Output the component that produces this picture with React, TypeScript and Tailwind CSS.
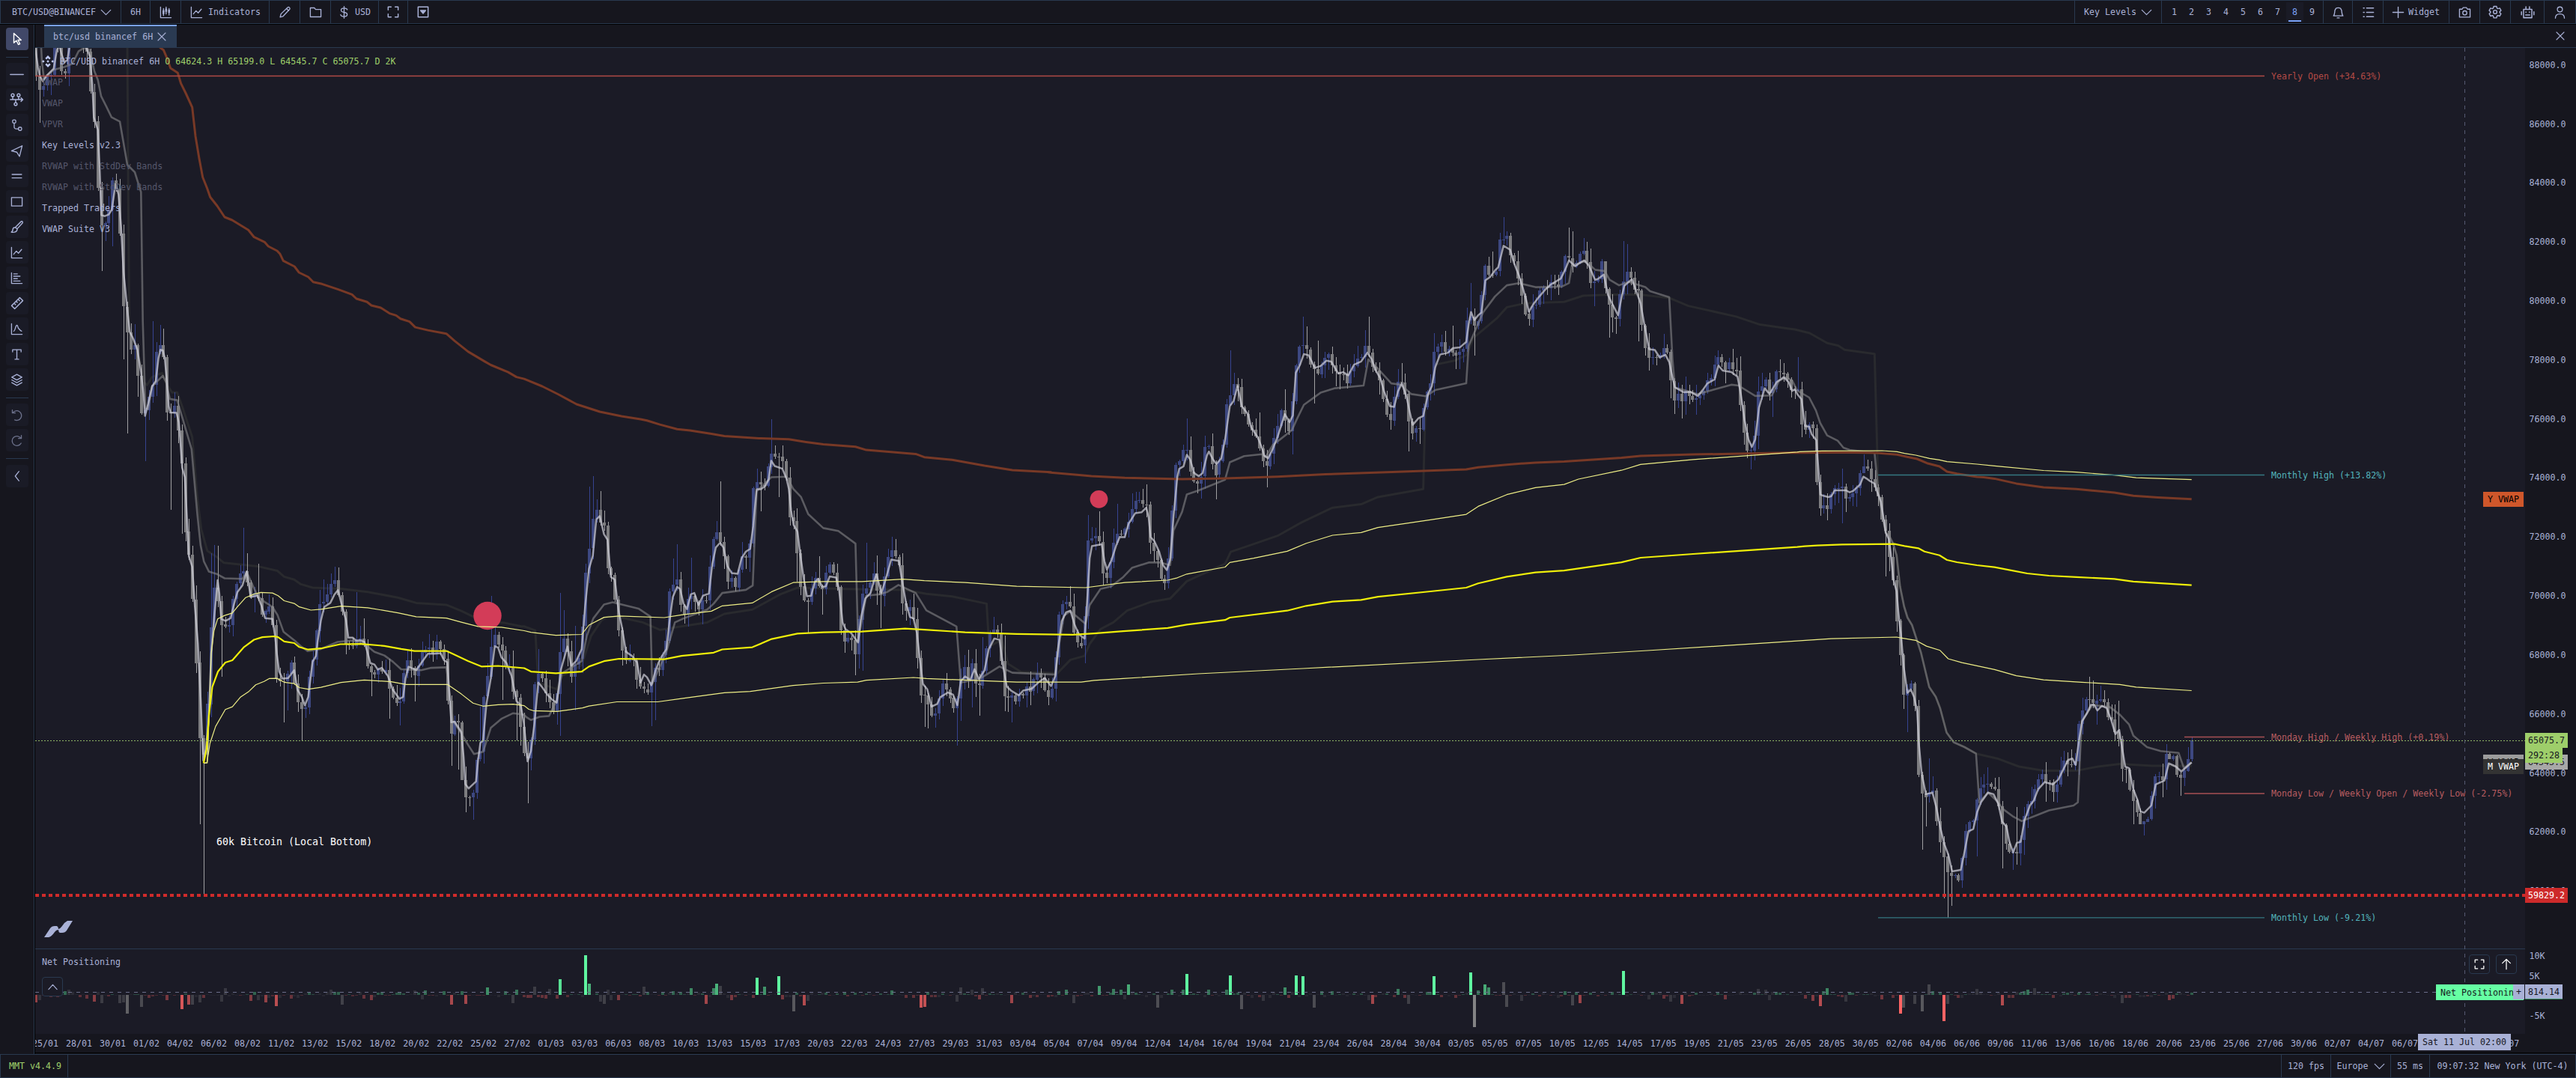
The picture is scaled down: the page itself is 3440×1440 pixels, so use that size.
import type { ReactNode } from 'react'

type Pt = [number, number]

// Each trace is stored in blocks: origin x/y, scale x/y, then a flat list of x,y pairs
interface Block {
  o: [number, number, number, number]
  d: number[]
}

const A: Block['o'] = [0, 30, 3, 3]
const C: Block['o'] = [0, 300, 2.24, 2.8]
const D: Block['o'] = [0, 850, 2.24, 2.6576]
const E: Block['o'] = [600, 560, 1.7422, 2.8]
const F: Block['o'] = [1400, 280, 1.568, 2.8]
const G: Block['o'] = [2260, 440, 3, 3]
const H: Block['o'] = [2300, 560, 1.3754, 2.306]
const P: Block['o'] = [0, 0, 1, 1]

function unpack(blocks: Block[]): Pt[] {
  const out: Pt[] = []
  for (const { o, d } of blocks) {
    for (let i = 0; i < d.length; i += 2) {
      out.push([o[0] + d[i] / o[2], o[1] + d[i + 1] / o[3]])
    }
  }
  return out
}

const toPoints = (pts: Pt[]) => pts.map(p => `${p[0].toFixed(1)},${p[1].toFixed(1)}`).join(' ')

// ---------- traces ----------

const DAILY: Block[] = [
  { o: A, d: [141,100,152,180,160,215,172,236,185,215,200,200,215,185,228,110,238,90,246,125,258,160,270,150,278,100,290,40,310,20,330,40,345,100,360,135,370,250,376,380,392,430,400,600,406,772,420,776,435,770,448,750,458,680,463,648,475,690,485,820,495,1000,510,1150,520,1240,535,1270,550,1310,565,1400,575,1490] },
  { o: C, d: [434,715,443,670,455,605,466,585,474,500,480,468,487,470,493,500,500,600,505,680,510,703,528,704,535,740,540,820,545,910,553,945,560,1120,565,1240,575,1280,583,1430,592,1567] },
  { o: D, d: [600,220,608,440,616,400,624,300,632,60] },
  { o: C, d: [640,1480,651,1330,656,1380,662,1475,675,1482,690,1472,700,1420,710,1375,725,1350,738,1297,750,1393,770,1387,782,1425,793,1472,815,1475,823,1540] },
  { o: D, d: [828,60,835,125,845,150,862,148,880,120,890,190,903,215,912,245,922,215,935,90,945,70] },
  { o: C, d: [950,1560,960,1480,970,1430,988,1415,1000,1385,1011,1367,1022,1420,1035,1480,1042,1545,1055,1545,1065,1555,1080,1555] },
  { o: D, d: [1090,20,1100,60,1108,95,1120,100,1130,118,1142,112,1160,140,1175,190,1195,222,1206,215,1213,150,1222,108,1245,120,1260,95,1280,62,1300,62,1318,60,1328,85,1338,92,1344,200,1350,305,1360,303,1380,340,1387,430,1392,525,1402,540,1424,515,1430,440,1437,378,1445,370,1455,240,1468,150,1480,35,1490,40,1500,75,1515,95,1530,140,1545,230,1558,245,1567,310] },
  { o: E, d: [182,1280,190,1240,198,1140,207,985,215,1000,228,1030,240,1050,250,1060,260,935,275,850,284,922,295,905,308,860,316,700,325,560,334,510,342,375,350,362,360,430,368,450,376,590,385,600,394,720,402,780,411,870,425,885,437,910,445,985,453,955,460,965,470,995,480,940,487,910,495,885,505,860,512,760,520,665,530,627,537,635,545,690,553,710,562,655,570,650,580,695,590,660,604,652,612,540,620,480,630,462,638,480,647,550,657,575,671,578,680,520,690,495,700,485,707,400,715,262,725,262,735,250,743,225,749,155,757,175,775,185,785,225,790,260,795,340,801,395,810,420,817,510,825,600,832,662,842,660,850,610,858,597,868,627,876,625,885,588,900,592,907,640,915,760,922,785,935,800,951,835,958,740,968,670,980,650,987,610,994,580,1005,650,1015,600,1028,525,1046,530,1053,600,1063,690,1072,740,1080,745,1088,800,1095,900,1102,990,1112,1010,1122,1075,1135,1065,1142,1040,1160,1022,1172,1030,1182,1070,1190,980,1200,962,1212,975,1222,935,1232,972,1245,940,1255,860,1268,820,1280,825,1288,920,1297,1000,1307,1015,1325,1033,1335,1015,1355,1008,1370,985,1385,968,1400,998,1410,960,1416,860,1425,755,1435,722,1445,716,1455,770,1465,805,1478,820,1484,680,1490,520,1495,475,1518,468,1524,530,1530,562,1540,530,1552,470,1560,440] },
  { o: F, d: [152,1225,160,1225,168,1175,182,1135,195,1132,205,1115,210,1150,214,1225,222,1240,232,1280,240,1330,248,1348,255,1310,262,1150,270,1000,274,970,283,960,290,917,297,935,305,985,315,997,323,985,332,920,336,905,345,935,352,952,362,930,370,860,380,735,388,715,396,660,405,735,418,765,425,815,438,850,447,890,452,920,460,930,470,895,480,850,487,810,495,765,505,795,512,770,518,610,527,580,535,540,545,545,558,592,570,585,582,565,592,568,607,613,617,608,628,620,640,580,655,568,668,535,677,560,685,600,695,630,703,680,715,735,724,738,732,680,740,650,750,700,757,760,763,805,775,780,785,772,795,690,803,660,810,590,820,542,837,535,847,518,862,515,875,495,880,430,885,383,892,413,900,395,907,385,915,265,925,252,935,228,942,215,953,135,967,150,975,200,985,245,993,290,1000,335,1006,382,1015,355,1028,325,1040,300,1052,280,1073,258,1082,225,1090,190,1103,212,1112,200,1122,190,1132,210,1145,263,1152,258,1163,243,1172,320,1180,350,1193,395,1200,330,1206,285,1222,260,1232,310,1240,350,1248,430,1258,522,1270,525,1280,553,1292,543,1300,570,1306,620,1312,665,1330,683,1345,682,1360,697,1370,675,1380,650,1395,635,1403,583,1412,602,1430,608,1443,625,1450,690,1458,790,1466,860,1473,888,1480,860,1488,740,1500,668,1510,690,1525,645,1540,627,1550,645] },
  { o: G, d: [400,247,410,240,422,262,437,280,444,330,452,388,468,390,478,420,497,445,502,520,508,600,513,662,525,667,545,672,557,668,570,645,615,645,630,653,645,647,657,635,672,622,685,590,698,598,712,608,730,618,742,655,755,690,765,750,775,815,787,840,795,900,805,1000,818,1050,825,1130,832,1195] },
  { o: H, d: [328,660,333,760,340,843,346,832,352,855,358,900,361,1000,366,1090,374,1155,386,1150,393,1195,400,1255,408,1310,415,1340,422,1393,438,1388,444,1340,452,1270,461,1262,468,1210,475,1180,488,1150,498,1155,507,1185,514,1240,522,1255,527,1300,534,1335,541,1305,548,1302,555,1235,565,1190,572,1175,580,1140,592,1118,607,1125,617,1110,626,1080,635,1050,643,1045,649,1065,655,990,661,930,670,905,677,880,683,880,689,897,697,883,706,890,715,930,722,970,729,957,735,1020,740,1070,747,1075,755,1140,762,1170,768,1208,775,1212,788,1190,796,1125,812,1113,820,1060,833,1070,843,1085,850,1075,862,1057] },
]

const SPIKES: Block[] = [
  { o: A, d: [158,402,202,290,406,995,421,875,451,898,494,1350,553,1500,611,1195,640,1213,655,1227] },
  { o: C, d: [380,780,401,373,434,885,456,360,489,390,510,1068,543,1155,554,1185,630,1228,641,1198,652,1200,728,1135,740,1230,772,1268,1011,1283,967,1328,1066,1375,1088,1473,1469,1388,1285,1532] },
  { o: D, d: [598,668,609,918,662,143,848,305,858,262,902,370,913,290,1110,212,1164,292,1197,316,1241,230,1349,460,1371,472,1382,498,1393,625,1403,603,1414,652,1437,250,1502,225,1557,390,1535,50] },
  { o: E, d: [157,1200,166,1222,182,1435,207,860,258,650,258,1185,267,715,292,1090,292,772,327,252,334,213,351,270,309,950,470,1148,478,1125,530,468,522,520,563,518,622,380,630,232,656,630,724,345,749,0,767,125,767,290,784,148,809,608,834,800,860,512,868,730,902,540,945,958,961,940,970,462,996,510,1005,782,1029,440,1038,447,1072,675,1105,1150,1113,1155,1182,1220,1190,1127,1208,863,1216,1078,1232,1108,1266,738,1241,815,1292,808,1309,1135,1300,1095,1326,1075,1445,625,1487,357,1512,343,1554,315,1478,912,1529,612] },
  { o: F, d: [175,1060,206,1027,236,1390,290,780,313,1062,351,1083,328,845,381,527,396,630,442,760,457,1038,496,672,511,915,534,400,542,437,557,725,564,490,595,513,664,450,671,400,717,822,740,573,755,905,762,860,809,462,847,434,885,273,892,545,954,27,931,157,984,155,1006,435,1090,68,1098,80,1121,107,1144,360,1166,200,1174,480,1190,465,1205,118,1212,130,1235,492,1258,603,1266,580,1304,705,1327,780,1334,768,1357,768,1411,540,1471,972,1540,573,1487,625,1517,775] },
  { o: G, d: [118,99,235,562,367,135,425,112,601,558,601,777,542,765,513,746,688,565,776,990,790,970] },
  { o: H, d: [334,892,341,963,367,1325,374,1255,408,1475,415,1535,420,1500,380,1045,468,1347,474,1102,488,1073,515,1383,535,1388,542,1195,595,1055,594,1178,675,793,682,805,695,820,702,835,689,942,729,868,742,1120,755,1248,769,1248,775,1243,782,1240,809,1165,822,1040,843,1160,862,980] },
]

const YEARLY: Block[] = [
  { o: A, d: [640,100,655,110,670,145,683,183,712,202,725,245,745,285,770,340,783,455,798,545,812,620,830,665,842,700,870,735,900,780,930,792,995,832,1018,860,1060,880,1075,897,1110,915,1122,928,1135,955,1180,978,1198,1002,1235,1020,1255,1040,1290,1048,1355,1070,1410,1090,1428,1107,1470,1120,1488,1134,1525,1143] },
  { o: C, d: [1165,332,1185,340,1198,352,1225,363,1242,384,1280,395,1335,408,1360,435,1400,475,1450,512,1468,525,1520,552,1545,570,1568,577] },
  { o: P, d: [724,516,746,527,770,540,801,550,830,556] },
  { o: E, d: [445,0,460,5,490,20,530,37,560,42,610,55,640,63,720,71,790,75,830,85,870,94,945,103,970,115,1085,130,1105,142,1170,152,1245,174,1310,190,1400,198] },
  { o: F, d: [0,983,60,992,90,997,160,1003,280,1008,370,1005,480,999,580,990,720,981,875,972,900,964,960,954,1020,946,1080,942,1200,928,1240,921,1350,916,1568,909] },
  { o: G, d: [450,494,600,493,740,495,820,502,860,511,900,519,940,536,990,549,1020,570,1060,578,1140,591] },
  { o: H, d: [480,179,500,183,540,198,590,210,650,215,720,226,755,236,800,241,862,246] },
]

const ANCHORED: Block[] = [
  { o: D, d: [609,450,618,400,625,280,635,180,652,125,674,93,695,85,730,38,760,12,785,3,820,0,832,3,850,18,880,24,895,38,922,47,960,43,1018,28,1080,27,1150,34,1200,45,1240,52,1335,52,1350,60,1400,88,1440,107,1490,105,1568,113] },
  { o: E, d: [190,944,248,950,308,944,325,925,360,905,395,896,500,898,540,885,615,873,635,861,705,853,750,822,810,802,870,797,960,794,1060,783,1105,787,1200,797,1320,803,1450,806,1500,801,1568,793] },
  { o: F, d: [250,1565,290,1552,370,1535,380,1526,500,1500,540,1482,595,1466,655,1460,690,1448,800,1428,875,1414,900,1398,960,1373,1020,1357,1080,1350,1200,1319,1240,1302,1350,1288,1568,1262] },
  { o: G, d: [450,869,500,866,600,862,810,860,850,868,905,877,930,890,990,905,1020,924,1060,933,1140,945] },
  { o: H, d: [500,456,560,475,600,482,650,486,720,492,755,500,862,511] },
]

const UPPER: Block[] = [
  { o: D, d: [609,450,620,449,628,200,632,60] },
  { o: C, d: [640,1520,651,1475,672,1462,695,1453,710,1430,735,1395,760,1382,780,1376,815,1378,832,1388,850,1407,880,1417,895,1430,930,1442,960,1439,1020,1427,1100,1433,1190,1452,1245,1467,1335,1472,1380,1487,1430,1503,1500,1506,1568,1519] },
  { o: E, d: [190,797,248,808,308,805,325,770,360,741,395,736,500,742,540,732,610,718,635,698,705,687,750,645,800,611,870,607,960,607,1055,598,1105,604,1200,611,1320,625,1480,630] },
  { o: F, d: [160,1395,250,1386,270,1377,290,1363,370,1337,380,1320,430,1304,500,1278,540,1248,595,1218,655,1208,690,1189,800,1160,875,1140,900,1110,960,1066,1020,1040,1080,1028,1110,1008,1200,975,1240,953,1350,935,1568,907] },
  { o: G, d: [430,490,520,487,760,486,820,490,850,497,895,504,950,517,990,523,1020,530,1140,540] },
  { o: H, d: [500,144,590,158,650,163,720,172,760,180,862,186] },
]

const LOWER: Block[] = [
  { o: D, d: [609,450,619,449,628,380,645,320,674,260,695,250,720,215,745,195,765,172,790,160,805,150,828,149,850,163,880,168,895,182,922,188,960,181,1020,164,1090,155,1170,161,1215,171,1338,171,1350,180,1380,205,1415,237,1445,248,1490,243,1535,241,1568,246] },
  { o: E, d: [185,1085,195,1090,250,1093,310,1080,325,1073,390,1057,485,1057,540,1045,640,1023,700,1018,800,996,870,987,950,983,970,976,1080,966,1110,970,1220,977,1320,983,1470,983,1500,977,1568,970] },
  { o: P, d: [1600,900,1740,893,1974,881,2100,875,2200,869] },
  { o: H, d: [0,698,80,689,200,676,320,671,330,674,355,681,375,699,400,712,415,738,440,750,500,771,540,790,590,803,660,810,730,817,760,825,862,836] },
]

const WEEKLY: Block[] = [
  { o: A, d: [163,60,168,160,176,225,215,190,260,178,290,165,315,115,335,103,360,110,378,195,392,230,405,295,425,335,447,380,480,397,510,570,540,600,565,680,572,1200,578,1400,583,1545] },
  { o: C, d: [443,690,455,605,487,565,497,590,508,652,530,657,545,720,573,840,590,1080,600,1200,610,1260,625,1298,650,1308,672,1323,725,1325,738,1300,770,1388,790,1410,815,1430,830,1460,848,1523,885,1560] },
  { o: D, d: [900,35,920,52,960,45,1010,20,1050,15,1085,22,1120,55,1150,68,1175,90,1200,117,1260,120,1290,112,1335,110,1345,200,1355,300,1380,345,1400,385,1418,418,1445,410,1468,325,1500,293,1535,273,1567,278] },
  { o: E, d: [180,1115,190,1125,210,1113,232,1110,250,1050,262,950,308,905,320,810,335,745,360,693,380,685,440,708,468,738,472,990,490,925,505,870,525,760,545,745,600,712,615,690,635,650,690,638,706,622,715,270,749,217,785,215,800,260,818,290,835,355,870,407,905,418,945,465,951,830,970,660,1000,655,1020,645,1045,620,1085,650,1110,715,1180,775,1190,985,1235,970,1280,925,1310,948,1410,955,1418,850,1430,735,1445,718,1480,765,1490,695,1515,635,1540,625] },
  { o: F, d: [157,1374,175,1340,210,1320,235,1320,255,1330,262,1200,280,1130,290,1065,315,1050,370,1010,380,945,410,922,447,915,455,925,470,880,485,860,510,825,520,785,535,730,570,685,600,668,660,658,670,560,690,595,718,650,738,655,760,690,790,698,810,675,875,650,880,510,910,385,935,325,960,283,985,275,1020,290,1075,288,1090,275,1096,210,1125,192,1145,225,1165,230,1175,262,1195,283,1215,270,1250,290,1260,305,1300,328,1307,560,1312,665,1360,690,1430,655,1445,658,1480,697,1515,695,1530,640,1545,627] },
  { o: G, d: [400,205,420,245,468,273,495,325,512,375,540,425,582,446,605,474,630,483,730,495,745,650,760,740,775,815,790,830,805,860,818,905,832,1030,848,1110,862,1155,880,1185] },
  { o: H, d: [365,720,380,825,392,855,400,890,412,965,425,995,445,1010,466,1030,472,1180,488,1150,507,1180,515,1200,535,1225,550,1238,580,1218,600,1205,645,1190,653,1180,660,930,680,880,712,887,730,910,747,940,755,975,780,1010,805,1022,838,1028,848,1075,862,1057] },
]

const MONTHLY: Block[] = [
  { o: A, d: [510,90,514,700,518,1240,530,1268] },
  { o: C, d: [412,470,430,590,440,600,455,570,485,555,500,600,515,628,530,628,545,680,575,795,590,1020,602,1140,620,1220,650,1245,670,1265,770,1278,830,1295,850,1317,880,1328,900,1345,935,1358,1020,1362,1100,1374,1190,1395,1245,1415,1335,1422,1380,1445,1430,1475,1460,1485,1510,1490,1560,1503] },
  { o: E, d: [175,775,200,790,207,985,250,1010,262,960,285,940,308,920,330,810,355,750,370,738,400,742,450,760,490,788,520,780,600,760,640,728,705,712,770,655,810,630,920,635,1060,638,1110,653,1170,663,1250,690,1256,850,1285,825,1300,915,1330,945,1415,950,1445,900,1478,885,1490,840,1515,785,1545,760] },
  { o: F, d: [165,1500,215,1467,255,1455,290,1390,370,1325,382,1280,420,1257,480,1220,530,1170,595,1115,655,1102,690,1075,785,1045,790,700,800,670,810,580,850,565,875,545,890,480,940,405,960,365,1000,350,1080,345,1120,322,1180,318,1235,317,1300,330,1340,360,1440,400,1490,430,1550,445] },
  { o: G, d: [410,0,470,15,540,55,585,65,610,82,730,98,745,650,775,815,790,830,805,860,818,905,832,1030,848,1110,862,1155,880,1185] },
  { o: H, d: [365,720,380,825,392,855,400,890,412,965,425,995,445,1010,466,1030,505,1045,545,1070,590,1083,650,1083,690,1070,730,1062,790,1068,862,1068] },
]

// ---------- candles ----------

const X0 = 48.25
const STEP = 4.862
const COUNT = 593

const rnd = (n: number) => {
  const s = Math.sin(n * 127.1 + 11.7) * 43758.5453
  return s - Math.floor(s)
}

const clamp = (v: number, lim: number) => Math.max(-lim, Math.min(lim, v))

const daily = unpack(DAILY)

function sample(pts: Pt[], x: number) {
  if (x <= pts[0][0]) return pts[0][1]
  for (let i = 1; i < pts.length; i++) {
    if (pts[i][0] >= x) {
      const [ax, ay] = pts[i - 1]
      const [bx, by] = pts[i]
      return bx === ax ? by : ay + ((by - ay) * (x - ax)) / (bx - ax)
    }
  }
  return pts[pts.length - 1][1]
}

function buildCandles() {
  const closes: number[] = []
  for (let i = -1; i < COUNT; i++) {
    const x = X0 + i * STEP
    const here = sample(daily, x + STEP * 0.6)
    const around = (sample(daily, x - STEP * 2.5) + sample(daily, x + STEP * 3.5)) / 2
    closes.push(here + clamp((here - around) * 0.6, 11) + (rnd(i) - 0.5) * 15)
  }
  closes[closes.length - 1] = 989
  const bars = []
  for (let i = 0; i < COUNT; i++) {
    const open = closes[i]
    const close = closes[i + 1]
    bars.push({
      x: X0 + i * STEP,
      open,
      close,
      high: Math.min(open, close) - 2 - Math.pow(rnd(i + 900), 2) * 18,
      low: Math.max(open, close) + 2 + Math.pow(rnd(i + 1900), 2) * 18,
    })
  }
  for (const [x, y] of unpack(SPIKES)) {
    const b = bars[Math.round((x - X0) / STEP)]
    if (!b) continue
    if (y < (b.open + b.close) / 2) b.high = y
    else b.low = y
  }
  return bars
}

const candles = buildCandles()
const ups = candles.filter(b => b.close < b.open)
const downs = candles.filter(b => b.close >= b.open)

const bodyPath = (list: typeof candles) =>
  list
    .map(b => {
      const top = Math.round(Math.min(b.open, b.close))
      const h = Math.max(1, Math.round(Math.abs(b.close - b.open)))
      return `M${Math.round(b.x - 2)} ${top}h4v${h}h-4z`
    })
    .join('')

const wickPath = (list: typeof candles) =>
  list.map(b => `M${Math.round(b.x)} ${Math.round(b.high)}h1V${Math.round(b.low)}h-1z`).join('')

// ---------- net positioning ----------

type Tone = 'g' | 'r' | 'n'
const TONES: Record<Tone, string> = { g: '#5ff5a0', r: '#ff6464', n: '#8f8f8f' }

const netBlocks: { ox: number; kx: number; ky: number; g: number[]; r: number[]; n: number[] }[] = [
  {
    ox: 0, kx: 2.24, ky: 2.6576,
    g: [194,14,1272,15,1457,27,1545,17,1380,12,1000,10,922,9],
    r: [107,-27,258,-12,281,-24,499,-18,543,-50,564,-34,749,-20,792,-26,825,-40,1108,-18,1087,-12,1348,-34,1391,-32,870,-12],
    n: [204,18,118,-18,302,-28,358,-30,368,-27,378,-67,422,-42,575,-34,597,-26,662,-23,673,25,771,-19,988,19,1021,-34,1240,15,1261,-17,1534,-30],
  },
  {
    ox: 600, kx: 1.3067, ky: 3,
    g: [22,14,117,20,193,63,237,160,244,45,371,12,390,14,422,28,460,27,466,45,536,70,548,32,574,75,689,12,771,18,1063,14,1076,22,1134,35,1159,24,1171,20,1184,42,1261,20,1280,20,1286,83,1324,20,1356,20,1362,78,1458,30,1477,78,1489,75,1521,14],
    r: [131,-10,137,-13,155,-10,168,-14,187,-14,295,-22,447,-36,492,-20,581,-18,619,-42,797,-12,810,-12,823,-52,829,-48,924,-18,981,-34,1464,-12],
    n: [110,-32,148,33,174,24,263,-28,269,-37,276,20,282,-20,339,32,473,35,600,-65,625,-24,886,-27,892,30,911,20,930,28,1089,-32,1178,-17,1235,-52,1382,-56,1419,-24,1509,-50],
  },
  {
    ox: 1750, kx: 1.3067, ky: 3,
    g: [18,14,37,14,152,24,203,12,209,12,215,75,279,90,292,18,304,42,311,30,444,14,546,95,597,12,812,12,895,14,901,27,1243,14,1250,20,1340,10,1537,10],
    r: [108,-36,253,-12,470,-33,647,-36,724,-17,864,-16,876,-24,889,-44,997,-18,1029,-75,1105,-105,1131,-12,1207,-42,1219,-12,1225,-12,1295,-12,1423,-12,1499,-20,1505,-16],
    n: [101,-20,171,-36,285,-128,336,50,343,-48,368,-24,457,-42,590,-18,629,-27,781,24,793,20,800,-20,933,-26,1035,-50,1054,-36,1067,-65,1080,42,1111,-36,1162,24,1264,26,1416,-32],
  },
]

function buildNet() {
  const bars: { x: number; h: number; tone: Tone }[] = []
  for (let i = 0; i < COUNT; i++) {
    const tone: Tone = (['g', 'r', 'n', 'n'] as Tone[])[Math.floor(rnd(i + 40) * 4)]
    const size = 0.6 + Math.pow(rnd(i + 300), 3) * 4
    const sign = tone === 'g' ? 1 : tone === 'r' ? -1 : rnd(i + 77) > 0.5 ? 1 : -1
    bars.push({ x: X0 + i * STEP, h: size * sign, tone })
  }
  for (const b of netBlocks) {
    for (const tone of ['g', 'r', 'n'] as Tone[]) {
      const d = b[tone]
      for (let i = 0; i < d.length; i += 2) {
        const slot = bars[Math.round((b.ox + d[i] / b.kx - X0) / STEP)]
        if (slot) {
          slot.h = d[i + 1] / b.ky
          slot.tone = tone
        }
      }
    }
  }
  return bars
}

const netBars = buildNet()

const netOpacity = (h: number, tone: Tone) => {
  const v = Math.abs(h)
  return tone === 'n' ? Math.min(0.9, 0.06 + v / 46) : Math.min(1, 0.18 + v / 29)
}

// ---------- labels ----------

const DATES = '25/01 28/01 30/01 01/02 04/02 06/02 08/02 11/02 13/02 15/02 18/02 20/02 22/02 25/02 27/02 01/03 03/03 06/03 08/03 10/03 13/03 15/03 17/03 20/03 22/03 24/03 27/03 29/03 31/03 03/04 05/04 07/04 09/04 12/04 14/04 16/04 19/04 21/04 23/04 26/04 28/04 30/04 03/05 05/05 07/05 10/05 12/05 14/05 17/05 19/05 21/05 23/05 26/05 28/05 30/05 02/06 04/06 06/06 09/06 11/06 13/06 16/06 18/06 20/06 23/06 25/06 27/06 30/06 02/07 04/07 06/07 09/07 11/07 13/07'.split(' ')

const PRICES = Array.from({ length: 15 }, (_, i) => 88000 - i * 2000)
const priceY = (p: number) => 86.7 + (88000 - p) * 0.03941

const OVERLAYS = [
  { name: 'VWAP', on: false },
  { name: 'VWAP', on: false },
  { name: 'VPVR', on: false },
  { name: 'Key Levels v2.3', on: true },
  { name: 'RVWAP with StdDev Bands', on: false },
  { name: 'RVWAP with StdDev Bands', on: false },
  { name: 'Trapped Traders', on: true },
  { name: 'VWAP Suite V3', on: true },
]

const LEVELS = [
  { x: 47, y: 101.5, label: 'Yearly Open (+34.63%)', line: '#b04a45', text: '#b34a45' },
  { x: 2508, y: 634.5, label: 'Monthly High (+13.82%)', line: '#357881', text: '#52b3bb' },
  { x: 2917, y: 984.5, label: 'Monday High / Weekly High (+0.19%)', line: '#a85054', text: '#b85c60' },
  { x: 2917, y: 1060, label: 'Monday Low / Weekly Open / Weekly Low (-2.75%)', line: '#a85054', text: '#b85c60' },
  { x: 2508, y: 1225.8, label: 'Monthly Low (-9.21%)', line: '#357881', text: '#52b3bb' },
]

// ---------- icons ----------

function Icon({ size = 17, w = 1.9, children, className }: { size?: number; w?: number; children: ReactNode; className?: string }) {
  return (
    <svg
      width={size}
      height={size}
      viewBox="0 0 24 24"
      fill="none"
      stroke="currentColor"
      strokeWidth={w}
      strokeLinecap="round"
      strokeLinejoin="round"
      className={`shrink-0 ${className ?? ''}`}
    >
      {children}
    </svg>
  )
}

const Down = () => <Icon size={15}><path d="M2 7l10 10L22 7" /></Icon>
const Close = ({ size = 12 }: { size?: number }) => <Icon size={size} w={2.2}><path d="M2 2l20 20M22 2L2 22" /></Icon>
const Corners = ({ size = 16 }: { size?: number }) => (
  <Icon size={size} w={2.2}><path d="M2 8V2h6M16 2h6v6M22 16v6h-6M8 22H2v-6" /></Icon>
)
const ChartLine = () => <Icon><path d="M2 2v20h20M6 15l5-6 4 4 6-7" /></Icon>

const TOOLS = [
  <Icon size={19}><path d="M1 12h22" /></Icon>,
  <Icon size={19}><circle cx="5" cy="4" r="2.4" /><circle cx="15" cy="4" r="2.4" /><circle cx="10" cy="19" r="2.4" /><path d="M1 11.500h21M19 8.500l3 3-3 3M5 6.500v5M15 6.500v5M10 11.500v5" /></Icon>,
  <Icon><rect x="4" y="1.500" width="6" height="6" rx="2" /><rect x="15" y="15.500" width="6" height="6" rx="2" /><path d="M7 7.500V15a3.500 3.500 0 0 0 3.500 3.500H15" /></Icon>,
  <Icon><path d="M22 2.500L2 12l10 2.500 5 8z" /></Icon>,
  <Icon><path d="M3 8.500h18M3 15h18" /></Icon>,
  <Icon><path d="M2 4h20v16H2z" /></Icon>,
  <Icon size={18}><path d="M8.500 13L19 2.500c1.500-1 3.500.5 2.500 2.500L12 15.500M8.500 13c-4 0-4.500 3-4.500 5-.3 1.500-1 2.500-2.500 3.500 4 .8 10.500.5 10.500-6zM8.500 13l3.500 2.500" /></Icon>,
  <ChartLine />,
  <Icon><path d="M2 2v20h20M6 4h7M6 8.500h12M6 13h7M6 17.500h12" /></Icon>,
  <Icon size={18}><path d="M16.500 2L22 7.500 7.500 22 2 16.500zM6.500 12l2.500 2.500M10 8.500l2 2M13.500 5l2.500 2.500" /></Icon>,
  <Icon><path d="M2 2v20h20M6 16c3 0 3.500-11 6-11 2 0 1.500 4 3 5.500S18 15 21 16" /></Icon>,
  <Icon><path d="M4 7V3h16v4M12 3v18M8.500 21h7" /></Icon>,
  <Icon><path d="M12 1.500l9.500 5.300-9.500 5.400-9.500-5.400zM2.500 12l9.500 5.300 9.500-5.300M2.500 17l9.500 5.300 9.500-5.300" /></Icon>,
]

function ToolButton({ children, className = 'bg-[#1a1b26]' }: { children: ReactNode; className?: string }) {
  return <div className={`flex h-[30px] w-[30px] items-center justify-center rounded ${className}`}>{children}</div>
}

function Cell({ className, children }: { className: string; children: ReactNode }) {
  return <div className={`flex h-full shrink-0 items-center border-[#29394f] ${className}`}>{children}</div>
}

function Header() {
  return (
    <header className="flex h-8 shrink-0 border border-[#29394f] bg-[#16161e]">
      <Cell className="w-[161px] justify-between border-r pr-3 pl-[15px]">BTC/USD@BINANCEF <Down /></Cell>
      <Cell className="w-[39px] justify-center border-r">6H</Cell>
      <Cell className="w-[41px] justify-center border-r">
        <Icon><path d="M2 2v20h20" /><path d="M7.500 5v13M12.500 2v13M18 5v12" /><path d="M7.500 8v7M12.500 5v6M18 7v6" strokeWidth="3.600" strokeLinecap="butt" /></Icon>
      </Cell>
      <Cell className="w-[118px] gap-[7px] border-r pl-3"><ChartLine />Indicators</Cell>
      <Cell className="w-[41px] justify-center border-r">
        <Icon><path d="M3 21l1.500-6L17.500 2.500q1.500-1 3 .5t.5 3L8.500 19.500zM15 5l4 4" /></Icon>
      </Cell>
      <Cell className="w-[41px] justify-center border-r">
        <Icon><path d="M2 3.500h7.500L12 6.500h10v14H2z" /></Icon>
      </Cell>
      <Cell className="w-16 gap-[6px] border-r pl-[9px]">
        <Icon><path d="M18 7c-.5-2-2.500-3-6-3-7 0-8 7 0 8s7.500 8 0 8c-4 0-6-1-6.500-3.500M12 1v22" /></Icon>USD
      </Cell>
      <Cell className="w-[39px] justify-center border-r"><Corners /></Cell>
      <Cell className="w-10 justify-center">
        <Icon size={16} w={2.2}><path d="M2 2h20v20H2z" /><path d="M7 9h10l-5 6z" fill="currentColor" /></Icon>
      </Cell>

      <Cell className="ml-auto w-[117px] justify-between border-x pr-3 pl-3">Key Levels <Down /></Cell>
      <Cell className="w-[216px] border-r pl-[5px]">
        {[1, 2, 3, 4, 5, 6, 7, 8, 9].map(n => (
          <div key={n} className={`relative flex h-[26px] w-[23px] items-center justify-center ${n === 8 ? 'bg-[#1a1b26] text-[#7aa2f7]' : ''}`}>
            {n}
            {n === 8 && <span className="absolute bottom-0 left-[3px] h-[2px] w-[17px] bg-[#7aa2f7]" />}
          </div>
        ))}
      </Cell>
      <Cell className="w-[39px] justify-center border-r">
        <Icon><path d="M3 18.500c3-3 1.500-6 3-11 1.500-5.500 10.500-5.500 12 0 1.500 5 0 8 3 11zM10 22.500h4" /></Icon>
      </Cell>
      <Cell className="w-[41px] justify-center border-r">
        <Icon w={2.2}><path d="M9 4h13M9 12h13M9 20h13M3 4h1.500M3 12h1.500M3 20h1.500" /></Icon>
      </Cell>
      <Cell className="w-[88px] gap-[5px] border-r pl-[11px]"><Icon><path d="M12 2v20M2 12h20" /></Icon>Widget</Cell>
      <Cell className="w-[41px] justify-center border-r">
        <Icon><path d="M2 6h5l2-3h6l2 3h5v15H2z" /><circle cx="12" cy="13" r="3.800" /></Icon>
      </Cell>
      <Cell className="w-[41px] justify-center border-r">
        <Icon size={18}><circle cx="12" cy="12" r="3.200" /><path d="M9.500 2h5l.8 3.200 1.700 1 3.200-1 2.300 4-2.300 2.300v1.500l2.300 2.300-2.300 4-3.200-1-1.700 1-.8 3.200h-5l-.8-3.200-1.700-1-3.200 1-2.300-4 2.300-2.300v-1.500L1.500 9.200l2.300-4 3.200 1 1.700-1z" /></Icon>
      </Cell>
      <Cell className="w-[45px] justify-center border-r">
        <Icon size={19}><path d="M5 7h14v14H5zM9 2.500v4M15 2.500v4M1.500 11v5M22.500 11v5M9 11.500v.5M15 11.500v.5M8.500 16.500h7" /></Icon>
      </Cell>
      <Cell className="w-[41px] justify-center">
        <Icon><circle cx="12" cy="6.500" r="4.800" /><path d="M3.500 23c0-5 3-8 8.500-8s8.500 3 8.500 8" /></Icon>
      </Cell>
    </header>
  )
}

function Toolbar() {
  return (
    <aside className="flex w-[46px] shrink-0 flex-col items-center gap-1 border-r border-[#29394f] bg-[#16161e] pt-[4px]">
      <ToolButton className="bg-[#414868] text-white">
        <Icon size={18}><path d="M6 2v17l4.500-4 3.500 7 2.800-1.300-3.500-6.700H19z" /></Icon>
      </ToolButton>
      <div className="mt-[5px] mb-[3px] h-px w-[30px] bg-[#29394f]" />
      {TOOLS.map((t, i) => <ToolButton key={i}>{t}</ToolButton>)}
      <div className="mt-[5px] mb-[3px] h-px w-[30px] bg-[#29394f]" />
      <ToolButton className="bg-[#1a1b26] text-[#6d728c]">
        <Icon><path d="M3.500 2.500v5.500H9M4.500 7.500A9 9 0 1 1 8 21" /></Icon>
      </ToolButton>
      <ToolButton className="bg-[#1a1b26] text-[#6d728c]">
        <Icon><path d="M20.500 2.500v5.500H15M19.500 7.500A9 9 0 1 0 20 17" /></Icon>
      </ToolButton>
      <div className="mt-[5px] mb-[4px] h-px w-[30px] bg-[#29394f]" />
      <ToolButton><Icon size={16}><path d="M15.500 2.500L8 12l7.500 9.500" /></Icon></ToolButton>
    </aside>
  )
}

function Chart() {
  return (
    <svg viewBox="47 64 3325 1317" width={3325} height={1317} className="absolute top-0 left-0 bg-[#1b1b26]">
      <g fill="none" strokeLinejoin="round">
        <polyline points={toPoints(unpack(MONTHLY))} stroke="#292a2e" strokeWidth="3" />
      </g>
      <g shapeRendering="crispEdges">
        <path d={wickPath(downs)} fill="#a0a0a2" />
        <path d={wickPath(ups)} fill="#364390" />
        <path d={bodyPath(downs)} fill="#7d7d80" />
        <path d={bodyPath(ups)} fill="#3d4881" />
      </g>
      <g fill="none" strokeLinejoin="round">
        <polyline points={toPoints(unpack(WEEKLY))} stroke="#8a8a8c" strokeOpacity=".58" strokeWidth="2.600" />
        <polyline points={toPoints(unpack(YEARLY))} stroke="#783926" strokeWidth="3" />
        <polyline points={toPoints(daily)} stroke="#d2d2dc" strokeOpacity=".7" strokeWidth="2.500" />
      </g>
      <circle cx="651" cy="822.500" r="18.700" fill="#d33c58" />
      <circle cx="1467.500" cy="666.800" r="11.900" fill="#d33c58" />
      <g fill="none" strokeLinejoin="round">
        <polyline points={toPoints(unpack(UPPER))} stroke="#eeee86" strokeWidth="1.200" />
        <polyline points={toPoints(unpack(LOWER))} stroke="#eeee86" strokeWidth="1.200" />
        <polyline points={toPoints(unpack(ANCHORED))} stroke="#eeee0a" strokeWidth="2.200" />
      </g>

      {LEVELS.map(l => (
        <g key={l.label}>
          <path d={`M${l.x} ${l.y}H3024`} stroke={l.line} strokeWidth="1.300" />
          <text x="3033" y={l.y + 4} fill={l.text}>{l.label}</text>
        </g>
      ))}
      <path d="M47 989.500H3372" stroke="#8fb565" strokeDasharray="2 2" />
      <path d="M47 1196H3372" stroke="#cf2b2b" strokeWidth="4" strokeDasharray="5 4" />
      <text x="289" y="1128.500" fill="#ffffff" className="text-[13.3px]">60k Bitcoin (Local Bottom)</text>

      <g fill="#a9b1d6">
        <path d="M59 1252l8-12q2-3 6-3h3q2 1 2 4q3-1 5-4q3-5 7-7h7l-8 13q-2 3-6 3h-3q-2-1-2-4q-3 0-5 3q-4 6-8 7z" />
      </g>

      <path d="M47 1267.500H3372" stroke="#29394f" />
      <g shapeRendering="crispEdges">
        {netBars.map((b, i) => (
          <rect
            key={i}
            x={Math.round(b.x - 2)}
            y={b.h > 0 ? 1329 - b.h : 1329}
            width="4"
            height={Math.abs(b.h)}
            fill={TONES[b.tone]}
            fillOpacity={netOpacity(b.h, b.tone)}
          />
        ))}
      </g>
      <path d="M47 1325.500H3253" stroke="#6b6e8a" strokeDasharray="5 6" />
      <path d="M3291.500 64V1381" stroke="#565a72" strokeDasharray="5 6" />
    </svg>
  )
}

function Legend() {
  return (
    <div className="absolute top-[4px] left-[9px] flex flex-col whitespace-pre">
      <div className="flex h-7 items-center gap-2">
        <svg width="16" height="16" viewBox="0 0 24 24" fill="#c0caf5" className="shrink-0">
          <path d="M12 0l5.500 5.500-2.700 2.700L12 5.400 9.200 8.200 6.500 5.500zM12 24l-5.500-5.500 2.700-2.700 2.800 2.800 2.800-2.800 2.700 2.700zM2.700 9.300L5.400 12l-2.700 2.700L0 12zM21.300 9.300L24 12l-2.700 2.700-2.700-2.700zM12 9.300l2.700 2.700-2.700 2.700L9.300 12z" />
        </svg>
        <span>BTC/USD binancef 6H <span className="text-[#9ece6a]">O 64624.3 H 65199.0 L 64545.7 C 65075.7 D 2K</span></span>
      </div>
      {OVERLAYS.map((o, i) => (
        <div key={i} className={`flex h-7 items-center ${o.on ? '' : 'text-[#55576b]'}`}>{o.name}</div>
      ))}
    </div>
  )
}

function PriceAxis() {
  return (
    <svg viewBox="3372 64 67 1317" width={67} height={1317} className="bg-[#16161e]" fill="#a9b1d6">
      {PRICES.map(p => <text key={p} x="3377.500" y={priceY(p) + 4}>{p.toFixed(1)}</text>)}
      <text x="3377.500" y="1281">10K</text>
      <text x="3377.500" y="1308">5K</text>
      <text x="3377.500" y="1361">-5K</text>
    </svg>
  )
}

// Tags pinned on the canvas edge and on the price scale
function Tags() {
  return (
    <>
      <div className="absolute top-[593px] left-[3269px] flex h-5 w-[54px] items-center justify-center bg-[#cf572b] text-black">Y VWAP</div>
      <div className="absolute top-[944px] left-[3269px] flex h-5 w-[54px] items-center justify-center bg-[#9c9c9c] text-black">W VWAP</div>
      <div className="absolute top-[950px] left-[3269px] flex h-5 w-[54px] items-center justify-center bg-[#333333] text-white">M VWAP</div>
      <div className="absolute top-[944px] left-[3325px] flex h-5 w-[57px] items-center justify-center bg-[#a8a8a8] text-[#222]">64343.5</div>
      <div className="absolute top-[935px] left-[3325px] flex h-5 w-[50px] items-center justify-center bg-[#9ece6a] text-[#16161e]">292:28</div>
      <div className="absolute top-[915px] left-[3325px] flex h-5 w-[57px] items-center justify-center bg-[#9ece6a] text-[#16161e]">65075.7</div>
      <div className="absolute top-[1122px] left-[3325px] flex h-5 w-[57px] items-center justify-center bg-[#cd2a2a] text-white">59829.2</div>
      <div className="absolute top-[1251px] left-[3206px] flex h-[21px] w-[117px] items-center overflow-hidden bg-[#66ffa3] pl-[6px] whitespace-nowrap text-[#16161e]">Net Positioning</div>
      <div className="absolute top-[1251px] left-[3309px] flex h-5 w-[15px] items-center justify-center bg-[#a9b1d6] text-[#16161e]">+</div>
      <div className="absolute top-[1251px] left-[3325px] flex h-5 w-[50px] items-center justify-center border-b border-[#3f8f66] bg-[#a9b1d6] text-[#16161e]">814.14</div>
    </>
  )
}

function PaneControls() {
  return (
    <>
      <div className="absolute top-[1213px] left-[9px]">Net Positioning</div>
      <div className="absolute top-[1241px] left-[9px] flex h-[26px] w-7 items-center justify-center rounded border border-[#29394f] bg-[#1b1b26]">
        <Icon size={15}><path d="M3 17l9-10 9 10" /></Icon>
      </div>
      <div className="absolute top-[1211px] left-[3250px] flex gap-[8px] text-white">
        <div className="flex h-[26px] w-7 items-center justify-center rounded border border-[#29394f] bg-[#1b1b26]"><Corners size={14} /></div>
        <div className="flex h-[26px] w-7 items-center justify-center rounded border border-[#29394f] bg-[#1b1b26]">
          <Icon size={16}><path d="M12 22V2M4 10l8-8 8 8" /></Icon>
        </div>
      </div>
    </>
  )
}

export default function App() {
  return (
    <div className="flex h-[1440px] w-[3440px] flex-col overflow-hidden bg-[#16161e] font-['DejaVu_Sans_Mono',monospace] text-[11.65px] leading-4 text-[#a9b1d6]">
      <Header />
      <div className="flex h-[1376px] shrink-0 border-t border-black">
        <Toolbar />
        <main className="flex min-w-0 flex-1 flex-col border-l border-black">
          <div className="flex h-[31px] shrink-0 items-stretch border-b border-[#29394f] pl-3">
            <div className="flex w-[177px] items-center gap-[6px] border-t-2 border-[#7aa2f7] bg-[#2a3a52] pl-3 whitespace-nowrap">
              btc/usd binancef 6H <Close />
            </div>
            <div className="mr-[15px] ml-auto flex items-center"><Close /></div>
          </div>
          <div className="relative flex h-[1317px] shrink-0 pl-[3325px]">
            <Chart />
            <PriceAxis />
            <Legend />
            <PaneControls />
            <Tags />
          </div>
          <div className="relative h-[26px] shrink-0 border-b border-black">
            <div className="flex h-full w-[3325px] items-center overflow-hidden">
              {DATES.map((d, i) => (
                <div key={d} className={`w-[45.03px] shrink-0 text-center ${i === 0 ? '-ml-[9px]' : ''}`}>{d}</div>
              ))}
            </div>
            <div className="absolute top-0 left-[3182px] flex h-[22px] w-[124px] items-center justify-center bg-[#a9b1d6] text-[#16161e]">
              Sat 11 Jul 02:00
            </div>
          </div>
        </main>
      </div>
      <footer className="flex h-8 shrink-0 border border-[#29394f]">
        <Cell className="w-[90px] border-r pl-[11px] text-[#9ece6a]">MMT v4.4.9</Cell>
        <Cell className="ml-auto w-[67px] justify-center border-x">120 fps</Cell>
        <Cell className="w-20 justify-center gap-[7px] border-r">Europe <Down /></Cell>
        <Cell className="w-[52px] justify-center border-r">55 ms</Cell>
        <Cell className="w-[194px] justify-center">09:07:32 New York (UTC-4)</Cell>
      </footer>
    </div>
  )
}
